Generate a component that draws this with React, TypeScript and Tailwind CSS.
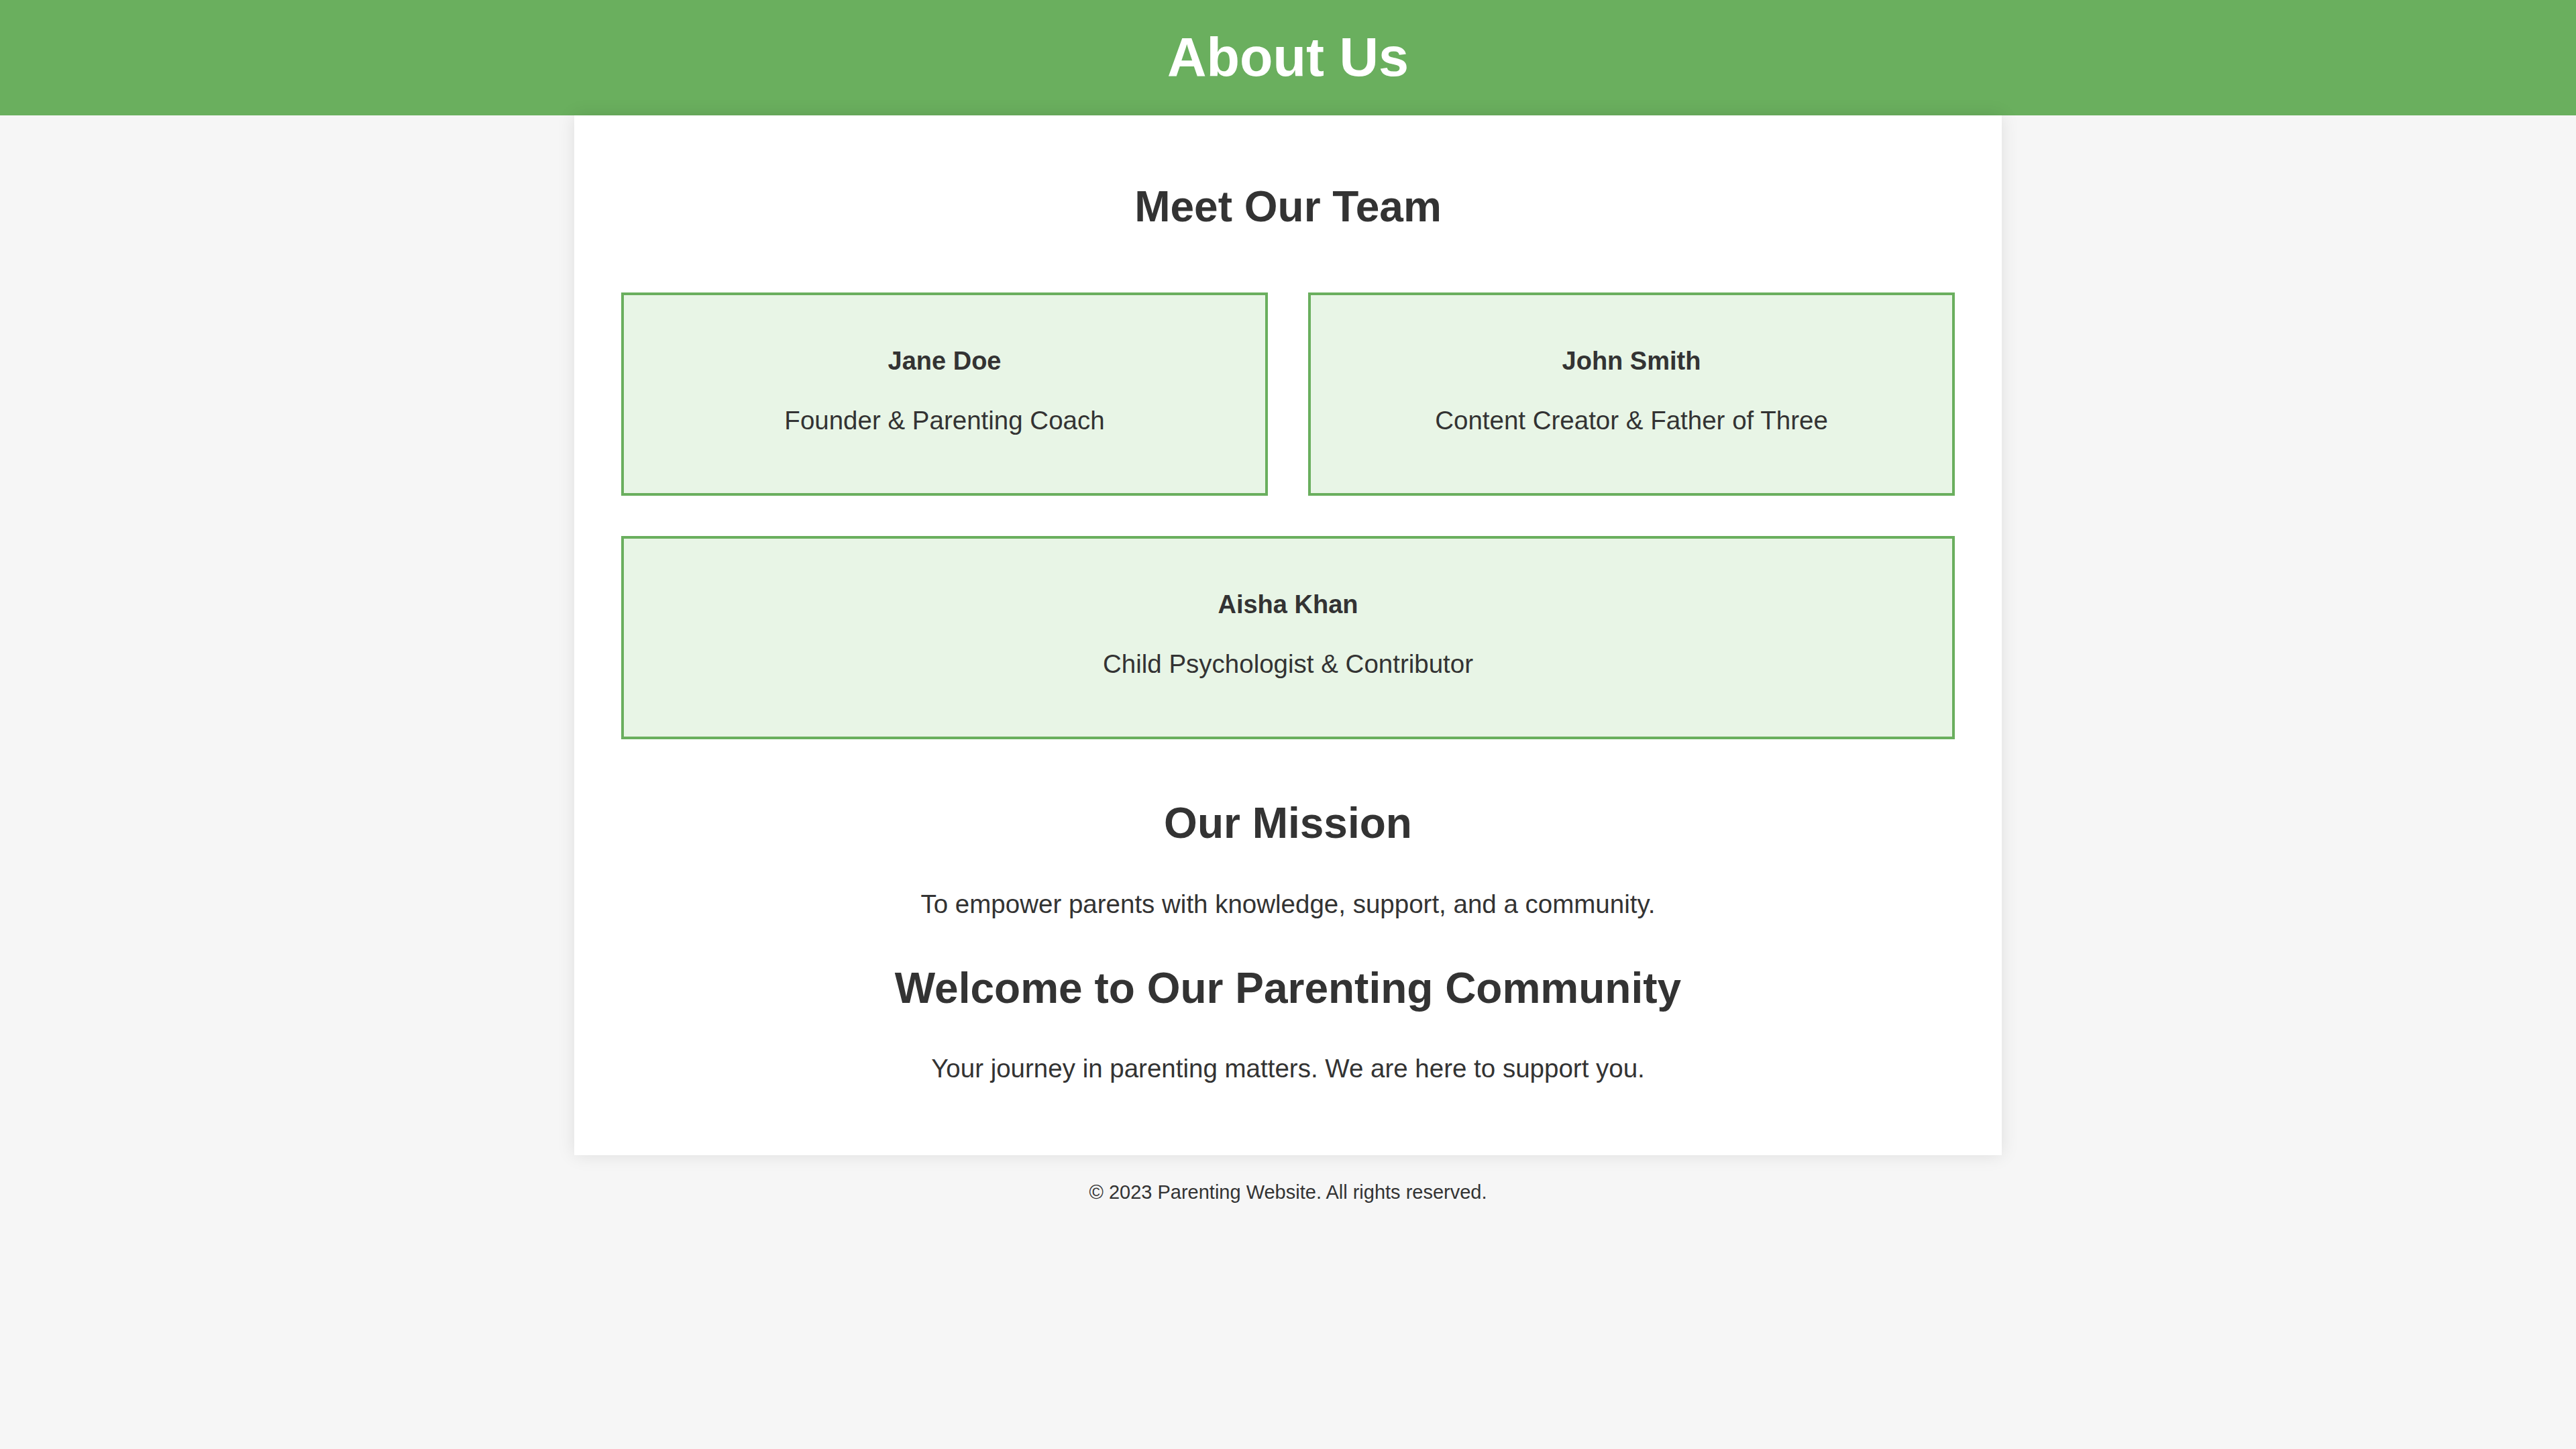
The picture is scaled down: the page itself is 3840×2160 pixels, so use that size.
const team = [
    { name: 'Jane Doe', role: 'Founder & Parenting Coach', wide: false },
    { name: 'John Smith', role: 'Content Creator & Father of Three', wide: false },
    { name: 'Aisha Khan', role: 'Child Psychologist & Contributor', wide: true },
];

const App = () => {
    return (
        <div className="min-h-screen bg-[#f6f6f6] font-['Liberation_Sans',Arial,sans-serif] text-[#333333]">
            {/* header */}
            <header className="h-[172px] bg-[#6aaf5e] flex items-center justify-center">
                <h1 className="text-[81px] leading-[1.15] font-bold text-white">
                    About Us
                </h1>
            </header>

            {/* main card */}
            <main className="mx-auto w-[2128px] bg-white shadow-[0_0_25px_rgba(0,0,0,0.1)] px-[70px] pt-[98px] pb-[107px] text-center">
                <h2 className="text-[64px] leading-[77px] font-bold">
                    Meet Our Team
                </h2>
                <div className="grid grid-cols-2 gap-[60px] mt-[89px]">
                    {team.map((member) => {
                        return (
                            <div
                                key={member.name}
                                className={`border-4 border-[#6aaf5e] bg-[#e8f5e6] pt-[75px] pb-[86px] ${member.wide ? 'col-span-2' : ''}`}
                            >
                                <h3 className="text-[38px] leading-[46px] font-bold">
                                    {member.name}
                                </h3>
                                <p className="text-[38.5px] leading-[45px] mt-[43px]">
                                    {member.role}
                                </p>
                            </div>
                        );
                    })}
                </div>

                <h2 className="text-[64px] leading-[77px] font-bold mt-[87px]">
                    Our Mission
                </h2>
                <p className="text-[38.5px] leading-[45px] mt-[59px]">
                    To empower parents with knowledge, support, and a community.
                </p>

                <h2 className="text-[64px] leading-[77px] font-bold mt-[65px]">
                    Welcome to Our Parenting Community
                </h2>
                <p className="text-[38.5px] leading-[45px] mt-[58px]">
                    Your journey in parenting matters. We are here to support you.
                </p>
            </main>

            {/* footer */}
            <footer className="text-center pt-[39px]">
                <p className="text-[29px] leading-[1.15]">
                    © 2023 Parenting Website. All rights reserved.
                </p>
            </footer>
        </div>
    );
};

export default App;
